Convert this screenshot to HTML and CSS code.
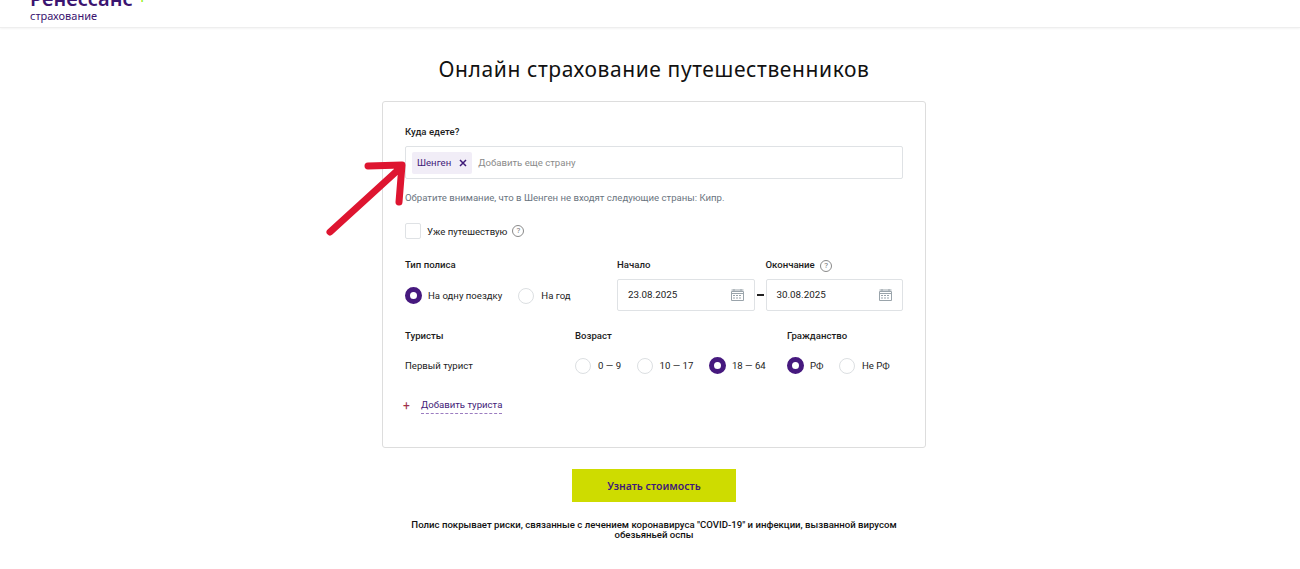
FILE: index.html
```html
<!DOCTYPE html>
<html>

<head>
    <title>Онлайн страхование путешественников</title>
    <meta name="viewport" content="width=device-width, initial-scale=1">
    <link rel="stylesheet" href="styles.css">
</head>

<body>
    <header class="header">
        <div class="logo">
            <div class="logo-name">Ренессанс<span class="logo-star">+</span></div>
            <div class="logo-sub">страхование</div>
        </div>
    </header>

    <h1 class="title">Онлайн страхование путешественников</h1>

    <form class="card">
        <div class="label">Куда едете?</div>
        <div class="country-input">
            <span class="tag">Шенген
                <svg class="tag-x" width="8" height="8" viewBox="0 0 8 8"><path d="M1 1l6 6M7 1L1 7" stroke="#3f1a78" stroke-width="1.500" fill="none"/></svg>
            </span>
            <span class="placeholder">Добавить еще страну</span>
        </div>
        <div class="note">Обратите внимание, что в Шенген не входят следующие страны: Кипр.</div>

        <div class="already">
            <span class="checkbox"></span>
            <span>Уже путешествую</span>
            <span class="help">?</span>
        </div>

        <div class="policy-row">
            <div class="policy-type">
                <div class="label">Тип полиса</div>
                <div class="radios">
                    <span class="radio checked"></span><span class="radio-text first">На одну поездку</span>
                    <span class="radio"></span><span class="radio-text">На год</span>
                </div>
            </div>
            <div class="date-col">
                <div class="label">Начало</div>
                <div class="date-input">23.08.2025
                    <svg class="cal" width="13" height="12" viewBox="0 0 13 12"><path d="M.5 2.500h12v9H.5zM.5 1h12M.5 4.500h12M3 0v2M10 0v2" fill="none" stroke="#9aa4ab"/><path d="M2 6h2v1H2zM5 6h2v1H5zM8 6h2v1H8zM2 8.500h2v1H2zM5 8.500h2v1H5zM8 8.500h2v1H8z" fill="#9aa4ab"/></svg>
                </div>
            </div>
            <div class="dash"></div>
            <div class="date-col">
                <div class="label">Окончание <span class="help">?</span></div>
                <div class="date-input">30.08.2025
                    <svg class="cal" width="13" height="12" viewBox="0 0 13 12"><path d="M.5 2.500h12v9H.5zM.5 1h12M.5 4.500h12M3 0v2M10 0v2" fill="none" stroke="#9aa4ab"/><path d="M2 6h2v1H2zM5 6h2v1H5zM8 6h2v1H8zM2 8.500h2v1H2zM5 8.500h2v1H5zM8 8.500h2v1H8z" fill="#9aa4ab"/></svg>
                </div>
            </div>
        </div>

        <div class="tourists">
            <div class="label">Туристы</div>
            <div class="label">Возраст</div>
            <div class="label">Гражданство</div>
            <div class="tourist-name">Первый турист</div>
            <div class="radios">
                <span class="radio"></span><span class="radio-text age">0 — 9</span>
                <span class="radio"></span><span class="radio-text age">10 — 17</span>
                <span class="radio checked"></span><span class="radio-text">18 — 64</span>
            </div>
            <div class="radios">
                <span class="radio checked"></span><span class="radio-text age">РФ</span>
                <span class="radio"></span><span class="radio-text">Не РФ</span>
            </div>
        </div>

        <div class="add-tourist">
            <span class="plus">+</span>
            <span class="add-link">Добавить туриста</span>
        </div>
    </form>

    <div class="submit-wrap">
        <button class="submit" type="button">Узнать стоимость</button>
    </div>

    <p class="disclaimer">Полис покрывает риски, связанные с лечением коронавируса "COVID-19" и инфекции, вызванной вирусом обезьяньей оспы</p>

    <!-- red arrow drawn over the form -->
    <svg class="arrow" width="90" height="84" viewBox="0 0 90 84">
        <path d="M4 76 L72 14 M42 10 L76 9 L73 46" fill="none" stroke="#de1530" stroke-width="7" stroke-linecap="round" stroke-linejoin="round"/>
    </svg>
</body>

</html>
```

FILE: styles.css
```css
body {
    margin: 0;
    background-color: #ffffff;
    color: #1c1c1c;
    font-family: Roboto, "Liberation Sans", sans-serif;
    font-size: 9.600px;
    position: relative;
    height: 569px;
    overflow: hidden;
}

.header {
    height: 27px;
    border-bottom: 1px solid #eeeeee;
    box-shadow: 0 1px 2px #f4f4f4;
    padding-left: 30px;
    display: flex;
    align-items: flex-end;
    overflow: hidden;
}

.logo {
    color: #3b1470;
    padding-bottom: 5px;
    font-family: "Noto Sans", sans-serif;
}

.logo-name {
    font-size: 20px;
    font-weight: 600;
    line-height: 18px;
    margin-bottom: 2px;
}

.logo-star {
    color: #8cf000;
    font-size: 12px;
    font-weight: 700;
    vertical-align: top;
    margin-left: 6px;
}

.logo-sub {
    font-size: 11px;
    line-height: 12px;
}

.title {
    margin: 28px 0 19px;
    padding-left: 8px;
    text-align: center;
    font-family: "Noto Sans", sans-serif;
    font-weight: 400;
    font-size: 21px;
    line-height: 26px;
    letter-spacing: 0.6px;
    color: #111111;
}

.card {
    box-sizing: border-box;
    width: 544px;
    height: 347px;
    margin: 0 0 0 382px;
    padding: 23px 22px 0;
    border: 1px solid #dddddd;
    border-radius: 3px;
}

.label {
    font-weight: 500;
    line-height: 13px;
    color: #1c1c1c;
}

.country-input {
    height: 33px;
    box-sizing: border-box;
    margin-top: 8px;
    border: 1px solid #dfe2e5;
    border-radius: 2px;
    padding: 0 6px;
    display: flex;
    align-items: center;
}

.tag {
    background-color: #f1edf7;
    color: #3f1a78;
    height: 22px;
    padding: 0 5px;
    border-radius: 2px;
    display: flex;
    align-items: center;
    gap: 8px;
    margin-right: 6px;
}

.placeholder {
    color: #8a8a8a;
    padding-bottom: 1px;
}

.note {
    margin-top: 12px;
    line-height: 13px;
    color: #6a7480;
}

.already {
    margin-top: 19px;
    display: flex;
    align-items: center;
    gap: 6px;
}

.checkbox {
    box-sizing: border-box;
    width: 16px;
    height: 16px;
    border: 1px solid #dfe2e5;
    border-radius: 2px;
}

.help {
    display: inline-block;
    box-sizing: border-box;
    width: 12px;
    height: 12px;
    border: 1px solid #8a8a8a;
    border-radius: 50%;
    font-size: 8px;
    line-height: 10px;
    text-align: center;
    color: #777777;
    font-weight: 400;
    margin-left: 3px;
}

.already .help {
    margin-left: -1px;
}

.policy-row {
    margin-top: 19px;
    display: flex;
    align-items: flex-start;
}

.policy-type {
    width: 212px;
}

.radios {
    display: flex;
    align-items: center;
}

.policy-type .radios {
    margin-top: 16px;
}

.radio {
    box-sizing: border-box;
    width: 16px;
    height: 16px;
    border: 1px solid #dcdfe2;
    border-radius: 50%;
    margin-right: 7px;
    flex-shrink: 0;
}

.radio.checked {
    width: 17px;
    height: 17px;
    margin-right: 6px;
    border: 5px solid #46197e;
    background-color: #ffffff;
}

.radio-text {
    line-height: 16px;
}

.radio-text.first {
    margin-right: 16px;
}

.radio-text.age {
    margin-right: 15.500px;
}

.date-col {
    flex: 1;
}

.date-col .label {
    height: 13px;
    margin-bottom: 8px;
}

.date-input {
    box-sizing: border-box;
    height: 32px;
    border: 1px solid #dfe2e5;
    border-radius: 2px;
    padding: 0 10px 1px;
    display: flex;
    align-items: center;
    justify-content: space-between;
    font-size: 9.800px;
}

.cal {
    flex-shrink: 0;
}

.dash {
    width: 7px;
    height: 2px;
    background-color: #222222;
    margin: 36px 2px 0;
}

.tourists {
    margin-top: 18px;
    display: grid;
    grid-template-columns: 170px 212px 1fr;
    row-gap: 15px;
    align-items: center;
}

.add-tourist {
    margin-top: 24px;
    display: flex;
    align-items: center;
    color: #3f1a78;
}

.plus {
    width: 18px;
    margin-left: -2px;
    font-size: 12px;
    color: #a0304a;
}

.add-link {
    line-height: 13px;
    padding-bottom: 2px;
    border-bottom: 1px dashed #9b7cc0;
}

.submit-wrap {
    margin-top: 21px;
    display: flex;
    justify-content: center;
    padding-left: 8px;
}

.submit {
    width: 164px;
    height: 33px;
    border: none;
    background-color: #cedc00;
    color: #3f1a78;
    font-family: "Noto Sans", sans-serif;
    font-size: 10.500px;
    font-weight: 600;
}

.disclaimer {
    width: 500px;
    margin: 18px 0 0 404px;
    text-align: center;
    line-height: 10px;
    color: #111111;
    font-weight: 500;
}

.arrow {
    position: absolute;
    left: 326px;
    top: 156px;
}
```
